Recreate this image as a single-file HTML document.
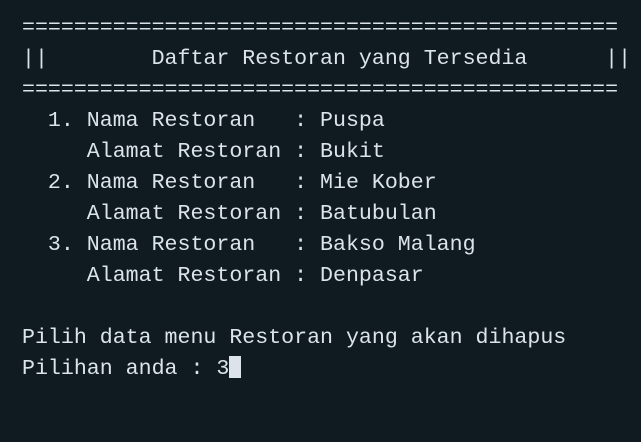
<!DOCTYPE html>
<html><head><meta charset="utf-8"><style>
html,body{margin:0;padding:0;width:641px;height:442px;background:#0f1a21;overflow:hidden}
pre{margin:0;padding:13px 0 0 22px;font-family:"Liberation Mono","DejaVu Sans Mono",monospace;font-size:21.6px;line-height:31px;color:#dce4ea;letter-spacing:0}
.c{display:inline-block;width:12px;height:22px;background:#dce4ea;vertical-align:-4px}
</style></head><body><pre>==============================================
||        Daftar Restoran yang Tersedia      ||
==============================================
  1. Nama Restoran   : Puspa
     Alamat Restoran : Bukit
  2. Nama Restoran   : Mie Kober
     Alamat Restoran : Batubulan
  3. Nama Restoran   : Bakso Malang
     Alamat Restoran : Denpasar

Pilih data menu Restoran yang akan dihapus
Pilihan anda : 3<span class="c"></span></pre></body></html>
